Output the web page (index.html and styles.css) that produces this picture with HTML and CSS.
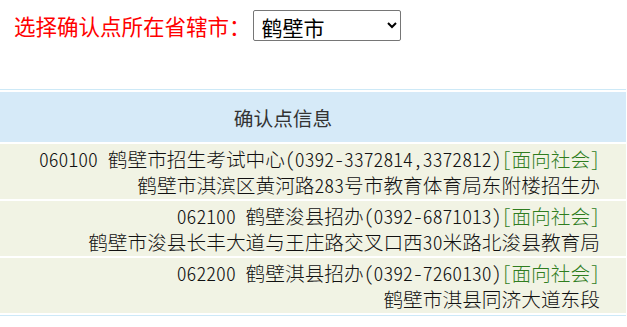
FILE: index.html
```html
<!DOCTYPE html>
<html>
<head>
  <meta charset="utf-8">
  <title>确认点查询</title>
  <link rel="stylesheet" href="styles.css">
</head>
<body>
  <div class="choose">
    <span class="choose-label">选择确认点所在省辖市：</span>
    <select class="city-select">
      <option>鹤壁市</option>
      <option>郑州市</option>
      <option>开封市</option>
      <option>洛阳市</option>
    </select>
  </div>

  <table class="points">
    <tr>
      <th>确认点信息</th>
    </tr>
    <tr>
      <td>
        060100 鹤壁市招生考试中心(0392-3372814,3372812)<span class="tag">[面向社会]</span><br>
        鹤壁市淇滨区黄河路283号市教育体育局东附楼招生办
      </td>
    </tr>
    <tr>
      <td>
        062100 鹤壁浚县招办(0392-6871013)<span class="tag">[面向社会]</span><br>
        鹤壁市浚县长丰大道与王庄路交叉口西30米路北浚县教育局
      </td>
    </tr>
    <tr>
      <td>
        062200 鹤壁淇县招办(0392-7260130)<span class="tag">[面向社会]</span><br>
        鹤壁市淇县同济大道东段
      </td>
    </tr>
  </table>
</body>
</html>
```

FILE: styles.css
```css
/* 确认点查询 */

body {
  margin: 0;
  font-family: "Liberation Serif", "Noto Sans CJK SC", serif;
  background-color: #fff;
}

.choose {
  display: flex;
  align-items: center;
  padding: 10px 0 0 14px;
  height: 31px;
}

.choose-label {
  color: #ff0000;
  font-size: 21.5px;
  margin-right: 2px;
}

.city-select {
  width: 148px;
  height: 31px;
  font-family: "Noto Sans CJK SC", sans-serif;
  font-size: 21px;
  color: #000;
  border: 1px solid #767676;
  border-radius: 2px;
  padding: 0 4px;
  background-color: #fff;
}

.points {
  width: 626px;
  margin-top: 48px;
  border-collapse: separate;
  border-spacing: 0 2px;
  border-top: 1px solid #cde9f7;
  border-bottom: 1px solid #cde9f7;
  font-size: 19.7px;
  color: #111;
}

.points th {
  background-color: #d6eaf8;
  height: 50px;
  padding: 0 60px 0 0;
  font-weight: normal;
  color: #333;
  text-align: center;
}

/* 半角数字，和宋体一样每个占半个字宽 */
.points td {
  background-color: #f1f3e4;
  font-family: "Noto Sans CJK SC", sans-serif;
  font-feature-settings: "hwid" 1;
  font-weight: 300;
  text-align: right;
  padding: 2px 26px 1px 0;
  line-height: 26px;
}

.tag {
  color: #2f7d1f;
}
```
